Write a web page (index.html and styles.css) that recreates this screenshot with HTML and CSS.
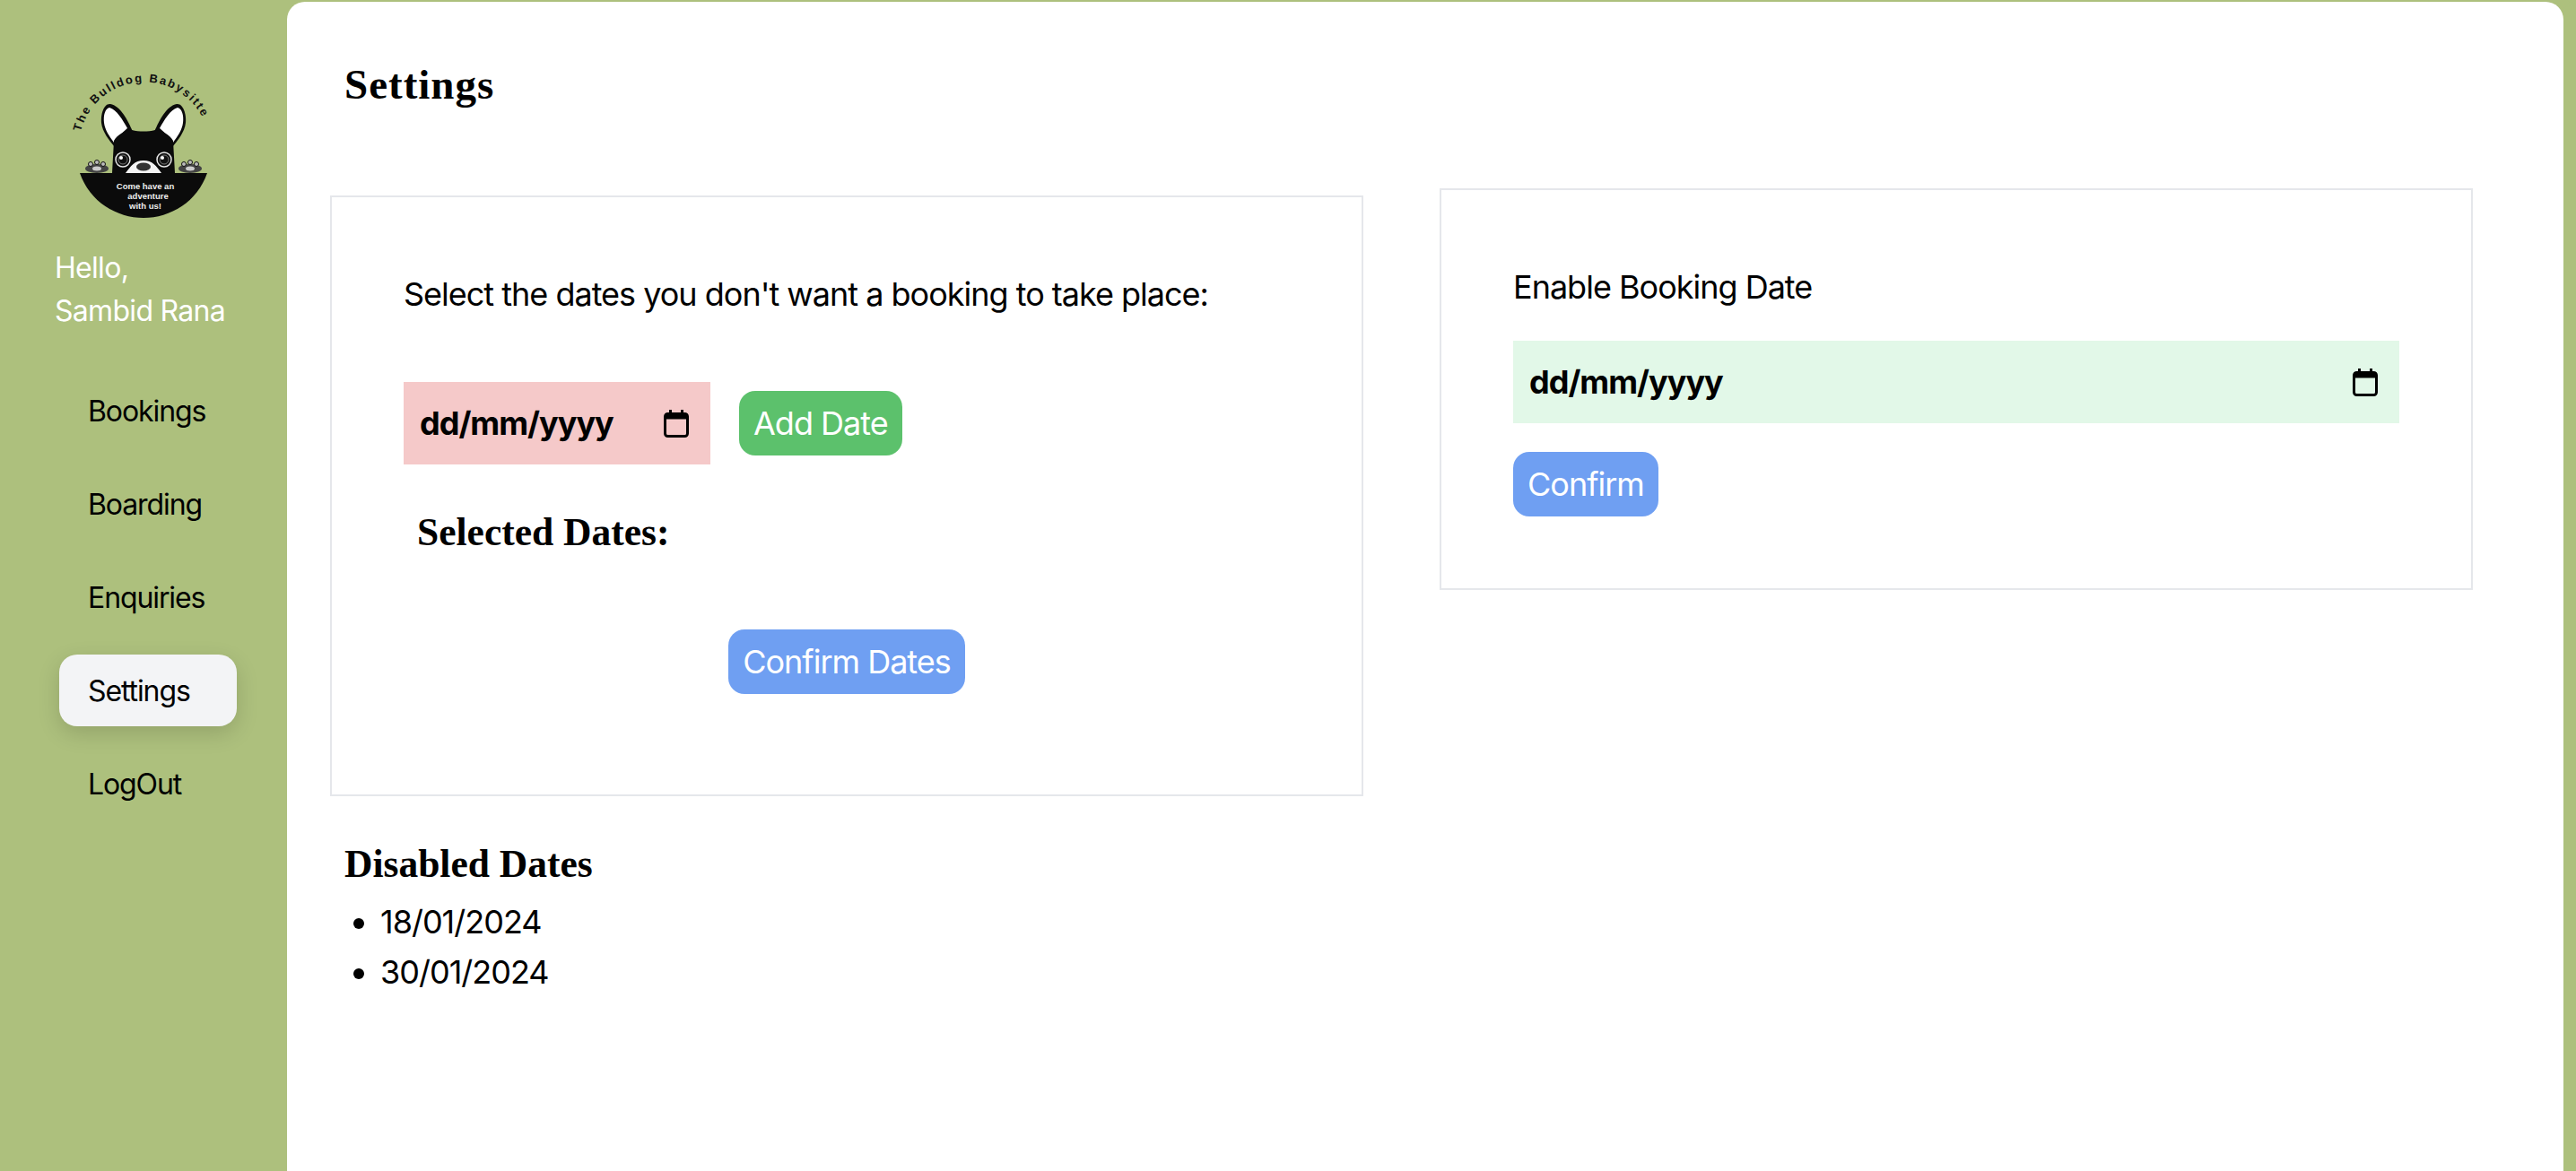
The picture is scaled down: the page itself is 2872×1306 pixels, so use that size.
FILE: index.html
```html
<!DOCTYPE html>
<html>
<head>
  <title>Settings</title>
  <link rel="stylesheet" href="styles.css">
</head>
<body>
  <aside class="sidebar">
    <svg class="logo" viewBox="0 0 160 165" width="160" height="165">
      <defs>
        <path id="logoArc" d="M 10 62 A 73 73 0 0 1 150 56"></path>
        <g id="logoEar">
          <path fill="#0b0b0b" d="M 43 31 C 36 30 32 42 33 52 C 34 62 42 72 48 79 L 68 62 C 62 48 54 33 43 31 Z"></path>
          <path fill="#fff" d="M 42 35 C 37 36 35 44 36 52 C 37 60 42 67 47 74 L 52 67 L 62 58 C 57 49 50 37 42 35 Z"></path>
        </g>
        <g id="logoPaw">
          <ellipse cx="0" cy="4" rx="13" ry="5" fill="#444"></ellipse>
          <circle cx="-7" cy="-1" r="2.5" fill="#bbb" stroke="#111"></circle>
          <circle cx="0" cy="-3" r="2.5" fill="#bbb" stroke="#111"></circle>
          <circle cx="7" cy="-1" r="2.5" fill="#bbb" stroke="#111"></circle>
          <ellipse cx="0" cy="4" rx="5" ry="2.5" fill="#ccc"></ellipse>
        </g>
        <g id="logoEye">
          <circle r="8" fill="#111" stroke="#e8e8e8" stroke-width="1.5"></circle>
          <circle r="5" fill="#111" stroke="#777"></circle>
          <circle cx="-2" cy="-2" r="2" fill="#fff"></circle>
        </g>
      </defs>
      <text class="logo-arc"><textPath href="#logoArc" textLength="176">The Bulldog Babysitte</textPath></text>
      <use href="#logoEar"></use>
      <use href="#logoEar" transform="matrix(-1 0 0 1 160 0)"></use>
      <path fill="#0b0b0b" d="M 45 108 L 47 72 C 50 66 60 60 67 60 C 75 62 85 62 93 60 C 100 60 110 66 113 72 L 115 108 Z"></path>
      <use href="#logoEye" x="57" y="93"></use>
      <use href="#logoEye" x="103" y="93"></use>
      <path fill="#f4f4f4" d="M 60 108 C 66 100 70 94 80 94 C 90 94 94 100 100 108 Z"></path>
      <ellipse cx="80" cy="101" rx="8" ry="4.5" fill="#333"></ellipse>
      <use href="#logoPaw" x="28" y="99"></use>
      <use href="#logoPaw" x="132" y="99"></use>
      <path fill="#0b0b0b" d="M 9 108 L 151 108 C 140 140 110 158 80 158 C 50 158 20 140 9 108 Z"></path>
      <text class="logo-small" x="82" y="126">Come have an</text>
      <text class="logo-small" x="85" y="137">adventure</text>
      <text class="logo-small" x="82" y="148">with us!</text>
    </svg>

    <p class="greeting">Hello,<br>Sambid Rana</p>

    <nav class="nav">
      <a class="nav-item">Bookings</a>
      <a class="nav-item">Boarding</a>
      <a class="nav-item">Enquiries</a>
      <a class="nav-item active">Settings</a>
      <a class="nav-item">LogOut</a>
    </nav>
  </aside>

  <main class="content">
    <h1 class="page-title">Settings</h1>

    <div class="columns">
      <div class="left-column">
        <section class="card">
          <p class="card-text">Select the dates you don't want a booking to take place:</p>
          <div class="date-row">
            <div class="date-field date-pink">
              <span>dd/mm/yyyy</span>
              <svg class="calendar" viewBox="0 0 28 31" width="28" height="31">
                <path d="M6 0h3v5H6zM19 0h3v5h-3z"></path>
                <rect x="1.5" y="4.5" width="25" height="25" rx="3" fill="none" stroke="#000" stroke-width="3"></rect>
                <rect x="1.5" y="4.5" width="25" height="6"></rect>
              </svg>
            </div>
            <button class="btn btn-green">Add Date</button>
          </div>
          <h3 class="selected-title">Selected Dates:</h3>
          <div class="center-row">
            <button class="btn btn-blue">Confirm Dates</button>
          </div>
        </section>

        <h3 class="disabled-title">Disabled Dates</h3>
        <ul class="disabled-list">
          <li>18/01/2024</li>
          <li>30/01/2024</li>
        </ul>
      </div>

      <section class="card card-right">
        <p class="card-text">Enable Booking Date</p>
        <div class="date-field date-green">
          <span>dd/mm/yyyy</span>
          <svg class="calendar" viewBox="0 0 28 31" width="28" height="31">
            <path d="M6 0h3v5H6zM19 0h3v5h-3z"></path>
            <rect x="1.5" y="4.5" width="25" height="25" rx="3" fill="none" stroke="#000" stroke-width="3"></rect>
            <rect x="1.5" y="4.5" width="25" height="6"></rect>
          </svg>
        </div>
        <button class="btn btn-blue btn-confirm">Confirm</button>
      </section>
    </div>
  </main>
</body>
</html>
```

FILE: styles.css
```css
* {
  box-sizing: border-box;
}

html, body {
  height: 100%;
}

body {
  display: flex;
  margin: 0;
  overflow: hidden;
  background-color: #adc07d;
  color: #000;
  font-family: Inter, "Liberation Sans", sans-serif;
  font-size: 36px;
  letter-spacing: -1px;
}

/* sidebar */
.sidebar {
  flex: 0 0 320px;
  padding-top: 85px;
}

.logo {
  display: block;
  margin-left: 80px;
  overflow: visible;
}

.logo-arc {
  font-family: "Liberation Sans", sans-serif;
  font-size: 13px;
  font-weight: bold;
  letter-spacing: 0;
  fill: #111;
}

.logo-small {
  font-family: "Liberation Sans", sans-serif;
  font-size: 9.5px;
  font-weight: bold;
  letter-spacing: 0;
  fill: #eee;
  text-anchor: middle;
}

.greeting {
  margin: 25px 0 47px 61px;
  color: #fff;
  font-size: 32px;
  letter-spacing: -0.7px;
  line-height: 48px;
}

.nav {
  display: flex;
  flex-direction: column;
  gap: 24px;
  width: 198px;
  margin-left: 66px;
}

.nav-item {
  height: 80px;
  padding-left: 32px;
  border-radius: 20px;
  font-size: 32px;
  letter-spacing: -1.1px;
  line-height: 81px;
}

.nav-item.active {
  background-color: #f3f4f6;
  box-shadow: 0 8px 24px rgba(0, 0, 0, 0.15);
}

/* main panel */
.content {
  flex: 1;
  margin: 2px 14px 0 0;
  padding: 0 101px 0 48px;
  background-color: #fff;
  border-radius: 20px 20px 0 0;
}

.page-title {
  margin: 68px 0 92px 16px;
  font-family: "Liberation Serif", serif;
  font-size: 47px;
  letter-spacing: 1px;
  line-height: 48px;
}

.columns {
  display: grid;
  grid-template-columns: 1152px 1152px;
  gap: 85px;
  align-items: start;
}

.left-column {
  margin-top: 8px;
}

.card {
  padding: 78px 80px 112px;
  border: 2px solid #e5e7eb;
}

.card-right {
  padding-bottom: 80px;
}

.card-text {
  margin: 0 0 68px;
  line-height: 60px;
}

.card-right .card-text {
  margin-bottom: 30px;
}

.date-row {
  display: flex;
  align-items: center;
  gap: 32px;
}

.date-field {
  display: flex;
  align-items: center;
  justify-content: space-between;
  height: 92px;
  padding: 0 24px 0 18px;
  font-weight: bold;
}

.date-pink {
  width: 342px;
  background-color: #f5c9c9;
}

.date-green {
  background-color: #e2f8e8;
}

.calendar {
  display: block;
}

.btn {
  height: 72px;
  padding: 0 16px;
  border: none;
  border-radius: 18px;
  color: #fff;
  font-family: inherit;
  font-size: 36px;
  letter-spacing: -1px;
}

.btn-green {
  background-color: #5cc16c;
}

.btn-blue {
  background-color: #6f9ff2;
}

.btn-confirm {
  margin-top: 32px;
}

.selected-title {
  margin: 51px 0 85px 15px;
  font-family: "Liberation Serif", serif;
  font-size: 43.5px;
  letter-spacing: 0;
  line-height: 48px;
}

.center-row {
  display: flex;
  justify-content: center;
}

.disabled-title {
  margin: 51px 0 13px 16px;
  font-family: "Liberation Serif", serif;
  font-size: 43.5px;
  letter-spacing: 0;
  line-height: 48px;
}

.disabled-list {
  margin: 0 0 0 16px;
  padding-left: 40px;
  line-height: 56px;
}
```
